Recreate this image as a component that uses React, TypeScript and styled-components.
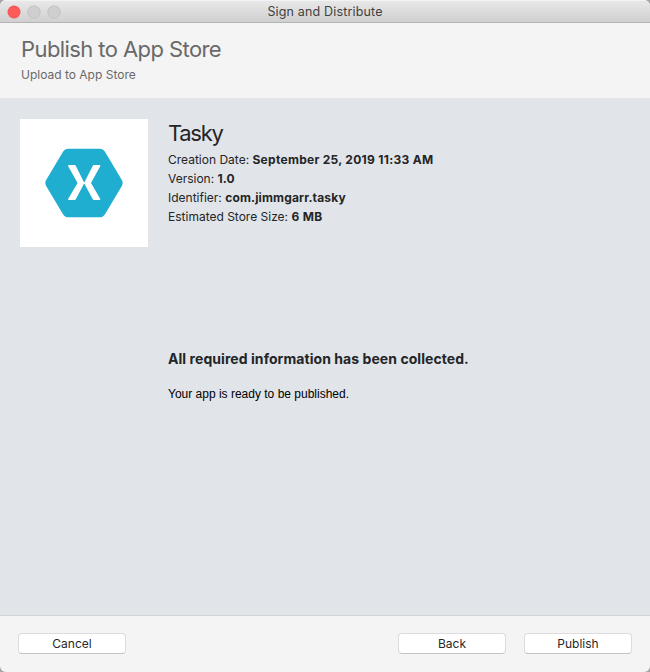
import React from "react";
import styled, { createGlobalStyle } from "styled-components";

const GlobalStyle = createGlobalStyle`
  *, *::before, *::after { box-sizing: border-box; }
  html, body { margin: 0; padding: 0; background: #a5a5a5; }
  body { font-family: Inter, "Liberation Sans", sans-serif; }
  h1, h2, h3, p { margin: 0; font-weight: 400; }
`;

const Window = styled.div`
  width: 650px;
  height: 672px;
  display: flex;
  flex-direction: column;
  overflow: hidden;
  border-radius: 6px;
  background: #f4f4f4;
`;

const TitleBar = styled.header`
  flex: none;
  height: 23px;
  display: grid;
  grid-template-columns: 1fr auto 1fr;
  align-items: center;
  padding: 0 8px;
  background: linear-gradient(#e8e8e8, #d0d0d0);
  border-top: 1px solid #f3f3f3;
  border-bottom: 1px solid #b3b3b3;
`;

const Lights = styled.div`
  display: flex;
  gap: 8px;
`;

const Light = styled.span<{ $fill: string; $edge: string }>`
  width: 12px;
  height: 12px;
  border-radius: 50%;
  background: ${(p) => p.$fill};
  box-shadow: 0 0 0 0.5px ${(p) => p.$edge};
`;

const WindowTitle = styled.div`
  font-size: 12.5px;
  line-height: 20px;
  color: #414141;
  letter-spacing: 0.16px;
`;

const Banner = styled.section`
  flex: none;
  height: 75px;
  padding: 12px 21px 0;
  color: #696969;
`;

const BannerTitle = styled.h1`
  font-size: 22px;
  line-height: 29px;
  letter-spacing: -0.58px;
`;

const BannerSubtitle = styled.p`
  margin-top: 2px;
  font-size: 12px;
  line-height: 17px;
`;

const Content = styled.main`
  flex: 1;
  display: grid;
  grid-template-columns: 128px 1fr;
  grid-template-rows: 230px auto;
  column-gap: 20px;
  align-content: start;
  padding: 21px 20px 0;
  background: #e1e4e9;
  color: #232526;
`;

const AppIcon = styled.div`
  width: 128px;
  height: 128px;
  background: #fff;
`;

const AppName = styled.h2`
  padding-top: 1px;
  font-size: 22px;
  line-height: 27px;
  letter-spacing: -1.3px;
  margin-bottom: 3px;
`;

const Detail = styled.p`
  font-size: 12px;
  line-height: 19px;
  white-space: nowrap;
`;

const DetailValue = styled.strong<{ $spacing: number }>`
  font-weight: 700;
  letter-spacing: ${(p) => p.$spacing}px;
`;

const StatusTitle = styled.h3`
  font-size: 14px;
  line-height: 20px;
  font-weight: 700;
  letter-spacing: 0.06px;
`;

const StatusText = styled.p`
  margin-top: 16px;
  font-family: "Liberation Sans", Arial, sans-serif;
  font-size: 12px;
  line-height: 18px;
  color: #000;
`;

const Footer = styled.footer`
  flex: none;
  height: 57px;
  display: flex;
  align-items: flex-start;
  gap: 18px;
  padding: 17px 18px 0;
  border-top: 1px solid #d2d3d4;
`;

const Button = styled.button<{ $pushRight?: boolean }>`
  width: 108px;
  height: 21px;
  margin: 0 ${(p) => (p.$pushRight ? "auto" : "0")} 0 0;
  padding: 0;
  border: 1px solid #dcdcdc;
  border-bottom-color: #c4c4c4;
  border-radius: 4px;
  background: #fff;
  font-family: inherit;
  font-size: 12px;
  line-height: 19px;
  color: #272727;
`;

const details = [
  { label: "Creation Date:", value: "September 25, 2019 11:33 AM", spacing: 0.29 },
  { label: "Version:", value: "1.0", spacing: 0 },
  { label: "Identifier:", value: "com.jimmgarr.tasky", spacing: 0.15 },
  { label: "Estimated Store Size:", value: "6 MB", spacing: 0.3 },
];

const HexagonLogo = () => (
  <svg width="128" height="128" viewBox="0 0 128 128" aria-hidden="true">
    <path
      d="M48.5 29.7H79.5C82 29.7 83.8 30.7 85 32.8L101.7 60.8C103 63 103 65 101.7 67.2L85 95.2C83.8 97.3 82 98.3 79.5 98.3H48.5C46 98.3 44.2 97.3 43 95.2L26.3 67.2C25 65 25 63 26.3 60.8L43 32.8C44.2 30.7 46 29.7 48.5 29.7Z"
      fill="#20aed0"
    />
    <path
      transform="translate(0 1)"
      d="M49 45H54.6Q55.4 45 55.8 45.7L63.6 61.6Q64.2 62.8 64.8 61.6L72.8 45.7Q73.2 45 74 45H79.4Q80.8 45 80.2 46.3L71 63L80.2 78.7Q80.8 80 79.4 80H74Q73.2 80 72.8 79.3L64.8 64.4Q64.2 63.2 63.6 64.4L55.8 79.3Q55.4 80 54.6 80H49Q47.6 80 48.2 78.7L57.6 63L48.2 46.3Q47.6 45 49 45Z"
      fill="#fff"
    />
  </svg>
);

export default function App() {
  return (
    <>
      <GlobalStyle />
      <Window>
        <TitleBar>
          <Lights>
            <Light $fill="#fc5b57" $edge="#ef554f" />
            <Light $fill="#cfcfcf" $edge="#b5b5b5" />
            <Light $fill="#cfcfcf" $edge="#b5b5b5" />
          </Lights>
          <WindowTitle>Sign and Distribute</WindowTitle>
        </TitleBar>
        <Banner>
          <BannerTitle>Publish to App Store</BannerTitle>
          <BannerSubtitle>Upload to App Store</BannerSubtitle>
        </Banner>
        <Content>
          <AppIcon>
            <HexagonLogo />
          </AppIcon>
          <div>
            <AppName>Tasky</AppName>
            {details.map((d) => (
              <Detail key={d.label}>
                {d.label} <DetailValue $spacing={d.spacing}>{d.value}</DetailValue>
              </Detail>
            ))}
          </div>
          <div />
          <div>
            <StatusTitle>All required information has been collected.</StatusTitle>
            <StatusText>Your app is ready to be published.</StatusText>
          </div>
        </Content>
        <Footer>
          <Button $pushRight>Cancel</Button>
          <Button>Back</Button>
          <Button>Publish</Button>
        </Footer>
      </Window>
    </>
  );
}
